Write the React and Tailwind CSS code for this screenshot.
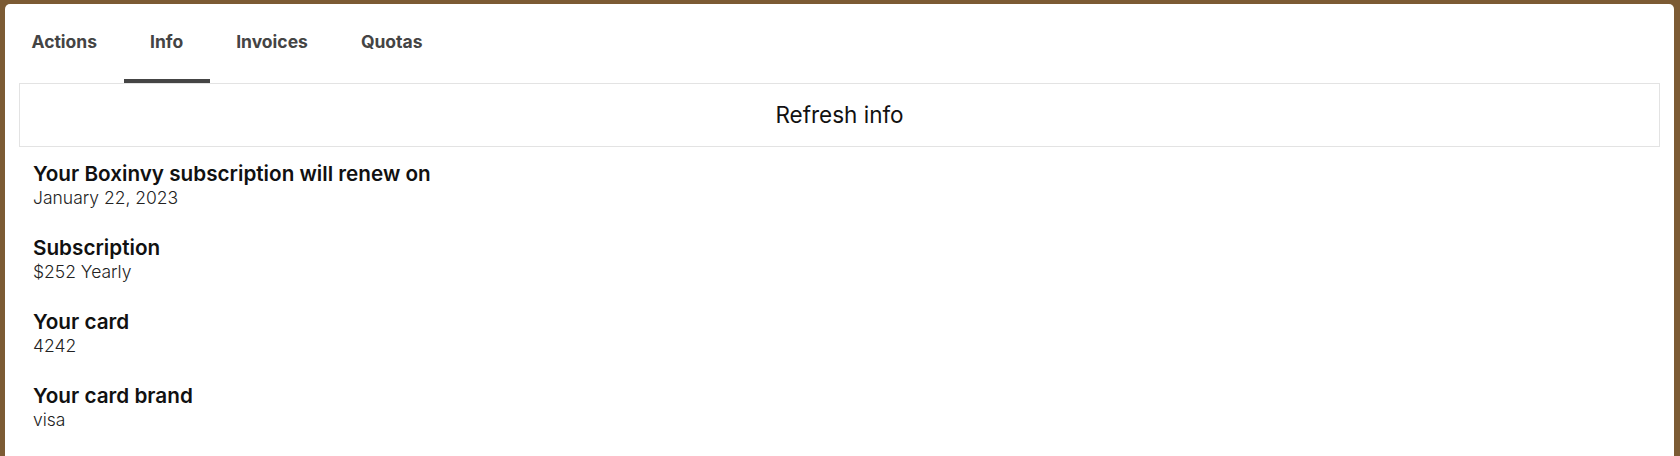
import React, { useState } from "react";

const TABS = ["Actions", "Info", "Invoices", "Quotas"];

const INFO = [
  { label: "Your Boxinvy subscription will renew on", value: "January 22, 2023" },
  { label: "Subscription", value: "$252 Yearly" },
  { label: "Your card", value: "4242" },
  { label: "Your card brand", value: "visa" }
];

export default function App() {
  const [active, setActive] = useState("Info");

  return (
    <div
      className="h-[456px] overflow-hidden bg-[#7c5b34] pt-[4px] pl-[5px] pr-[6px]"
      style={{ fontFamily: "Inter, 'Noto Sans', sans-serif" }}
    >
      <div className="h-full bg-white rounded-t-[5px]">
        <div className="flex">
          {TABS.map((tab) => (
            <button
              key={tab}
              onClick={() => setActive(tab)}
              className={
                "h-[79px] px-[26.5px] pt-[2px] border-b-[4px] text-[17.5px] font-bold text-[#444444] " +
                (active === tab ? "border-[#454545]" : "border-transparent")
              }
            >
              {tab}
            </button>
          ))}
        </div>

        <div className="mx-[14px]">
          <button className="w-full h-[64px] border border-[#e3e3e3] text-[22.5px] text-[#111111]">
            Refresh info
          </button>

          <div className="px-[14px] pt-[15px]">
            {INFO.map((item) => (
              <div key={item.label} className="mb-[27px]">
                <div className="text-[20.7px] leading-[24px] font-semibold text-[#111111]">{item.label}</div>
                <div className="text-[17.5px] leading-[22px] mt-[1px] font-light text-[#222222]">{item.value}</div>
              </div>
            ))}
          </div>
        </div>
      </div>
    </div>
  );
}
